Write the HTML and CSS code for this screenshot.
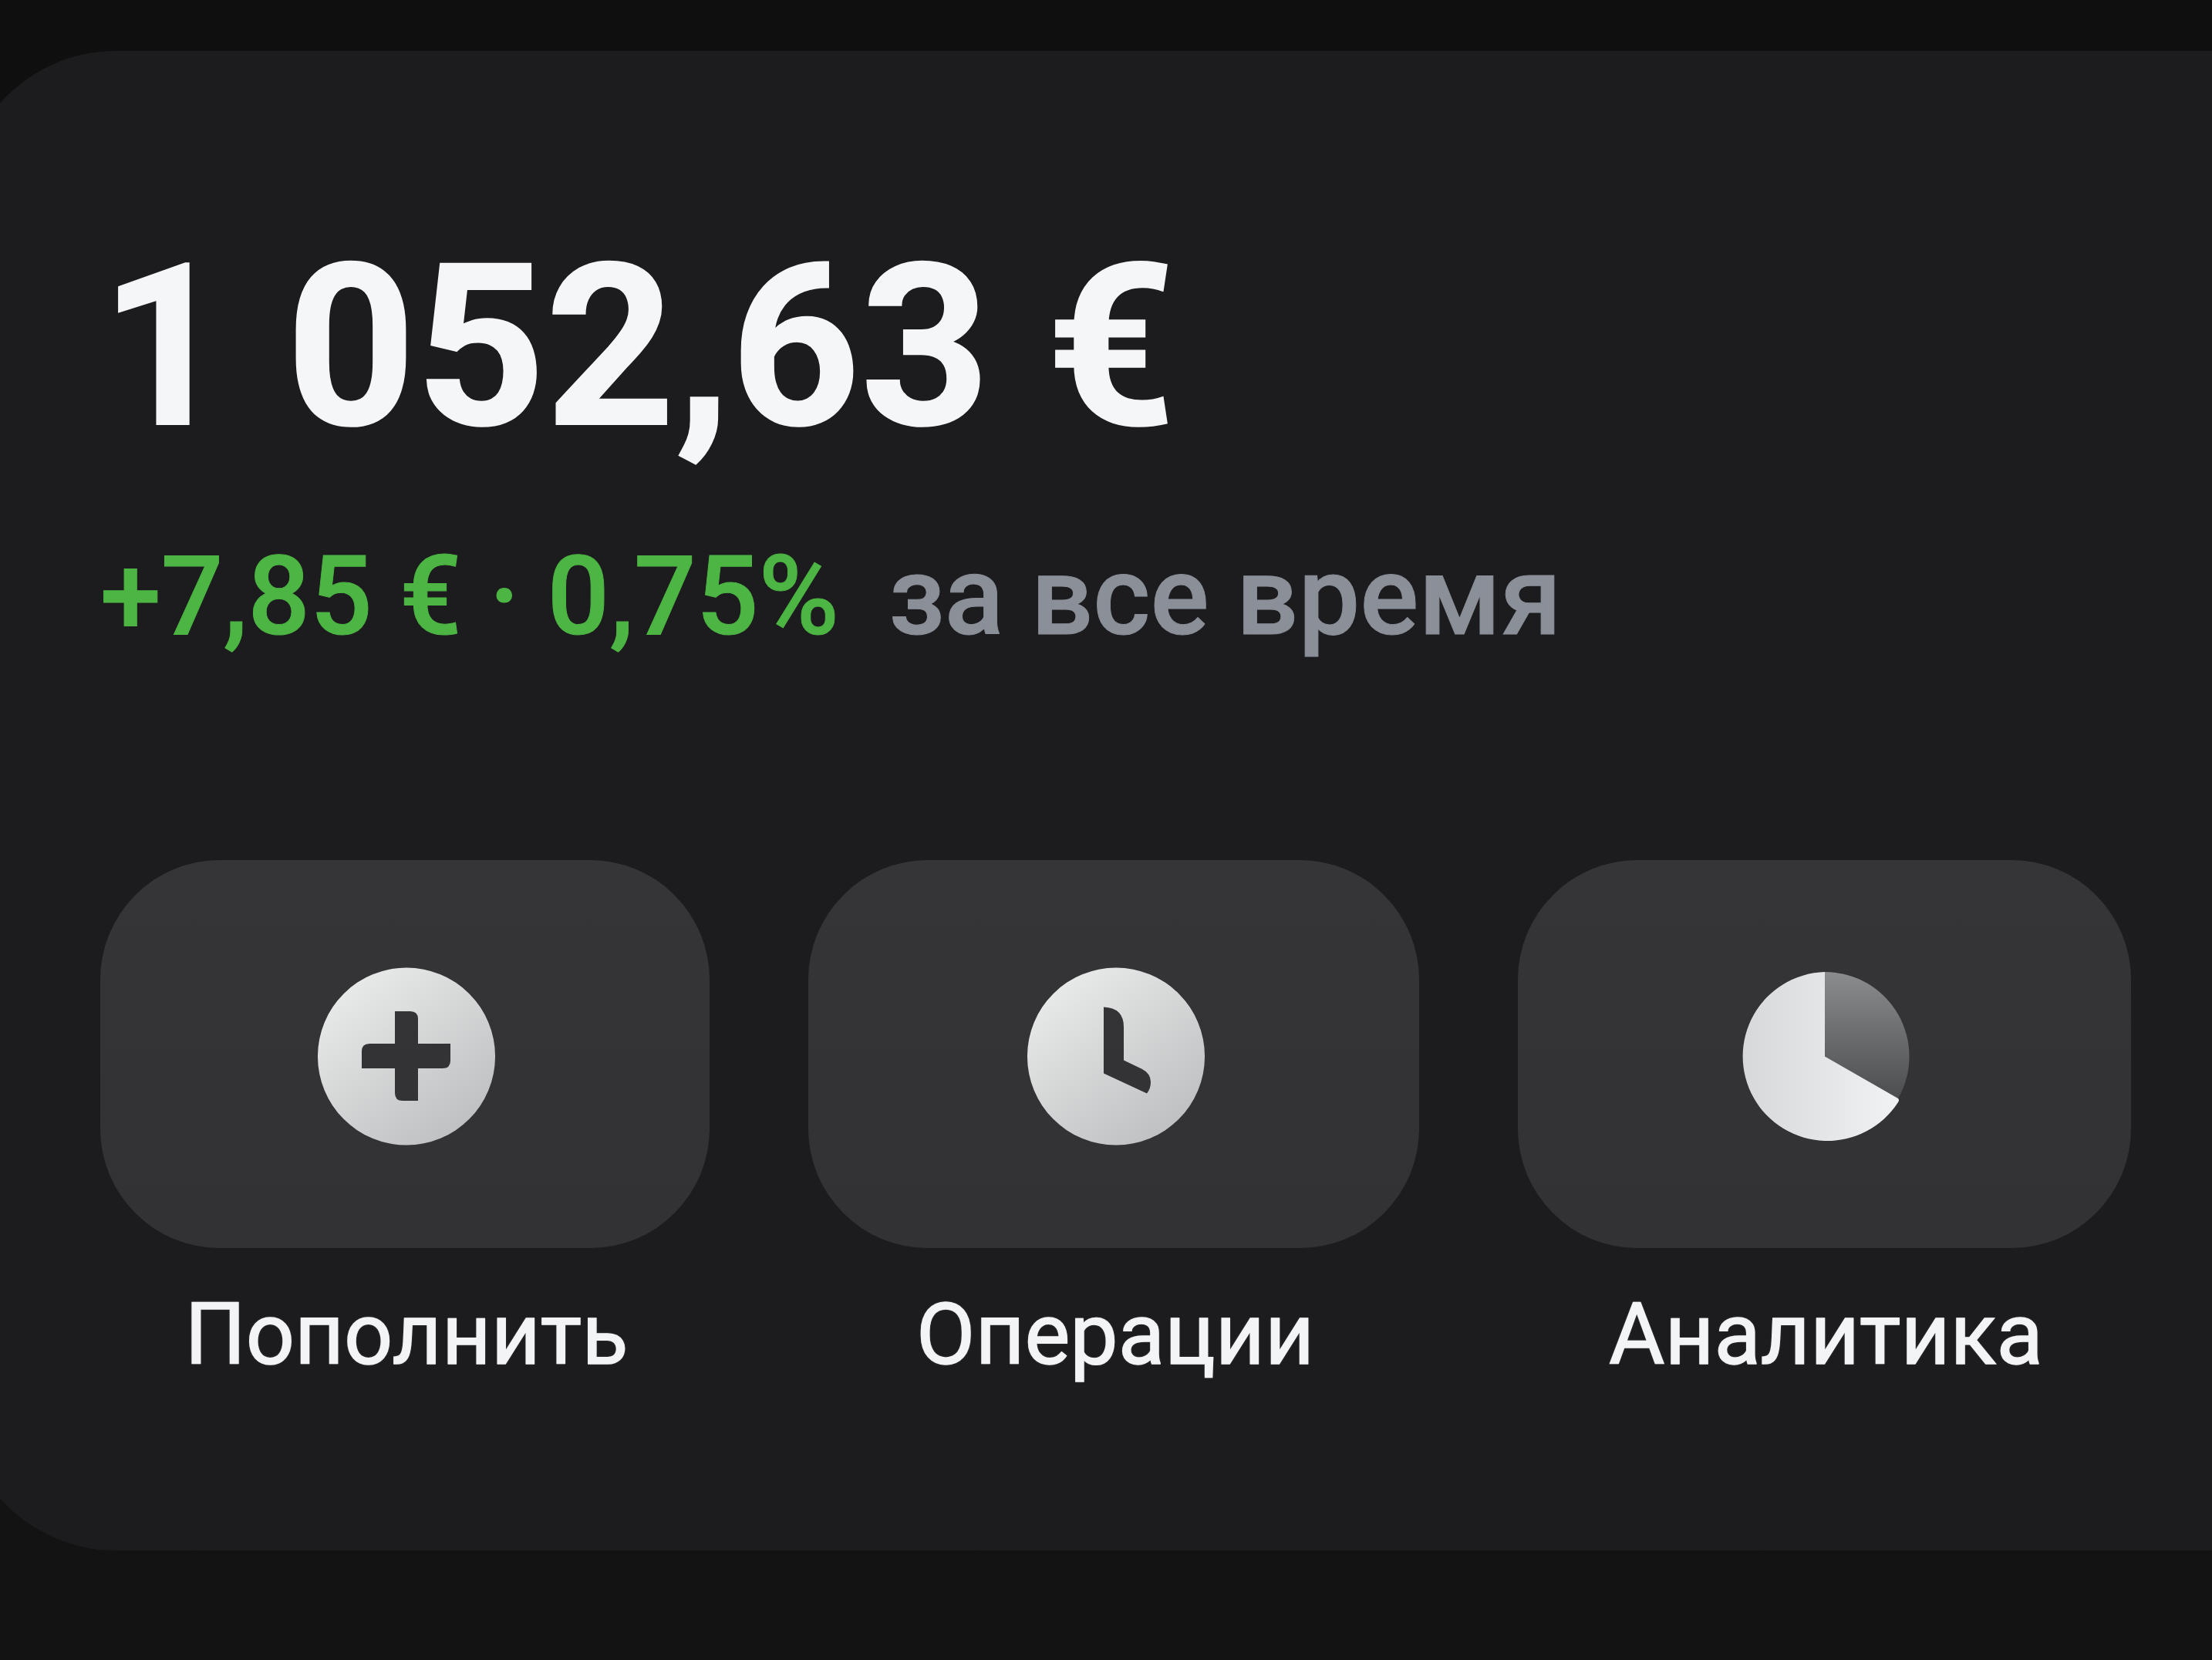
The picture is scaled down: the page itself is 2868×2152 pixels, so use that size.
FILE: index.html
```html
<!DOCTYPE html>
<html lang="ru">
<head>
<meta charset="UTF-8" />
<title>Баланс</title>
<link rel="stylesheet" href="styles.css">
</head>
<body>
<section class="card">
  <h1 class="amount">1 052,63 €</h1>
  <p class="change"><span class="change-value">+7,85 € · 0,75%</span> <span class="change-period">за все время</span></p>

  <div class="actions">
    <div class="action">
      <div class="action-btn">
        <svg class="icon" viewBox="0 0 240 240">
          <defs>
            <linearGradient id="discPlus" x1="0.15" y1="0.05" x2="0.85" y2="0.95">
              <stop offset="0" stop-color="#eaebeb" />
              <stop offset="1" stop-color="#bcbebf" />
            </linearGradient>
          </defs>
          <path fill="url(#discPlus)" fill-rule="evenodd" d="M122 7.500a115 115 0 1 0 0 230a115 115 0 1 0 0-230z M107 64h20q10 0 10 10v32h42v22q0 10-10 10h-32v42h-20q-10 0-10-10v-32h-43v-22q0-10 10-10h33z" />
        </svg>
      </div>
      <div class="action-label">Пополнить</div>
    </div>
    <div class="action">
      <div class="action-btn">
        <svg class="icon" viewBox="0 0 240 240">
          <defs>
            <linearGradient id="discClock" x1="0.15" y1="0.05" x2="0.85" y2="0.95">
              <stop offset="0" stop-color="#eaebeb" />
              <stop offset="1" stop-color="#bcbebf" />
            </linearGradient>
          </defs>
          <path fill="url(#discClock)" fill-rule="evenodd" d="M123 7.500a115 115 0 1 0 0 230a115 115 0 1 0 0-230z M107 58.500q26 1 26 26v43l23 11q12 6 12 17q0 9-5 15l-56-26z" />
        </svg>
      </div>
      <div class="action-label">Операции</div>
    </div>
    <div class="action">
      <div class="action-btn">
        <svg class="icon" viewBox="0 0 240 240">
          <defs>
            <linearGradient id="pieLight" x1="0" y1="0" x2="1" y2="0">
              <stop offset="0" stop-color="#d6d8d9" />
              <stop offset="1" stop-color="#f1f2f3" />
            </linearGradient>
            <linearGradient id="pieDark" x1="0" y1="0" x2="0" y2="1">
              <stop offset="0" stop-color="#8a8c8d" />
              <stop offset="1" stop-color="#4c4d4f" />
            </linearGradient>
          </defs>
          <path fill="url(#pieDark)" d="M120 13a109.500 109.500 0 0 1 95 164l-95-54.500z" />
          <path fill="url(#pieLight)" d="M120 13v109.500l95 54.500q2 2 0 5a109.500 109.500 0 1 1-95-169z" />
        </svg>
      </div>
      <div class="action-label">Аналитика</div>
    </div>
  </div>
</section>
</body>
</html>
```
FILE: styles.css
```css
html, body {
  margin: 0;
  height: 100%;
}
body {
  background: linear-gradient(#0f0f0f, #131313);
  font-family: Roboto, sans-serif;
  overflow: hidden;
  padding-top: 66px;
  box-sizing: border-box;
}
.card {
  background: #1c1c1e;
  height: 1944px;
  margin: 0 -200px 0 -50px;
  padding: 214px 0 0 180px;
  box-sizing: border-box;
  border-radius: 200px;
}
.amount {
  margin: 0;
  color: #f5f6f8;
  font-size: 293px;
  font-weight: 700;
  line-height: 340px;
  -webkit-text-stroke: 2px #f5f6f8;
}
.change {
  margin: 69px 0 0;
  font-size: 142px;
  font-weight: 500;
  line-height: 170px;
}
.change-value {
  color: #4cb543;
  -webkit-text-stroke: 1px #4cb543;
}
.change-period {
  margin-left: 29px;
  color: #8a8f98;
  -webkit-text-stroke: 1px #8a8f98;
}
.actions {
  display: grid;
  grid-template-columns: 790px 792px 795px;
  gap: 128px;
  margin-top: 256px;
}
.action-btn {
  height: 503px;
  background: linear-gradient(#353537, #323234);
  border-radius: 155px;
  display: flex;
  align-items: center;
  justify-content: center;
}
.icon {
  width: 240px;
  height: 240px;
}
.action-label {
  margin-top: 47px;
  padding-left: 4px;
  color: #f3f4f5;
  font-size: 111px;
  line-height: 130px;
  text-align: center;
  -webkit-text-stroke: 1.5px #f3f4f5;
  text-shadow: 0 0 3px rgba(255, 255, 255, 0.25);
}
```
